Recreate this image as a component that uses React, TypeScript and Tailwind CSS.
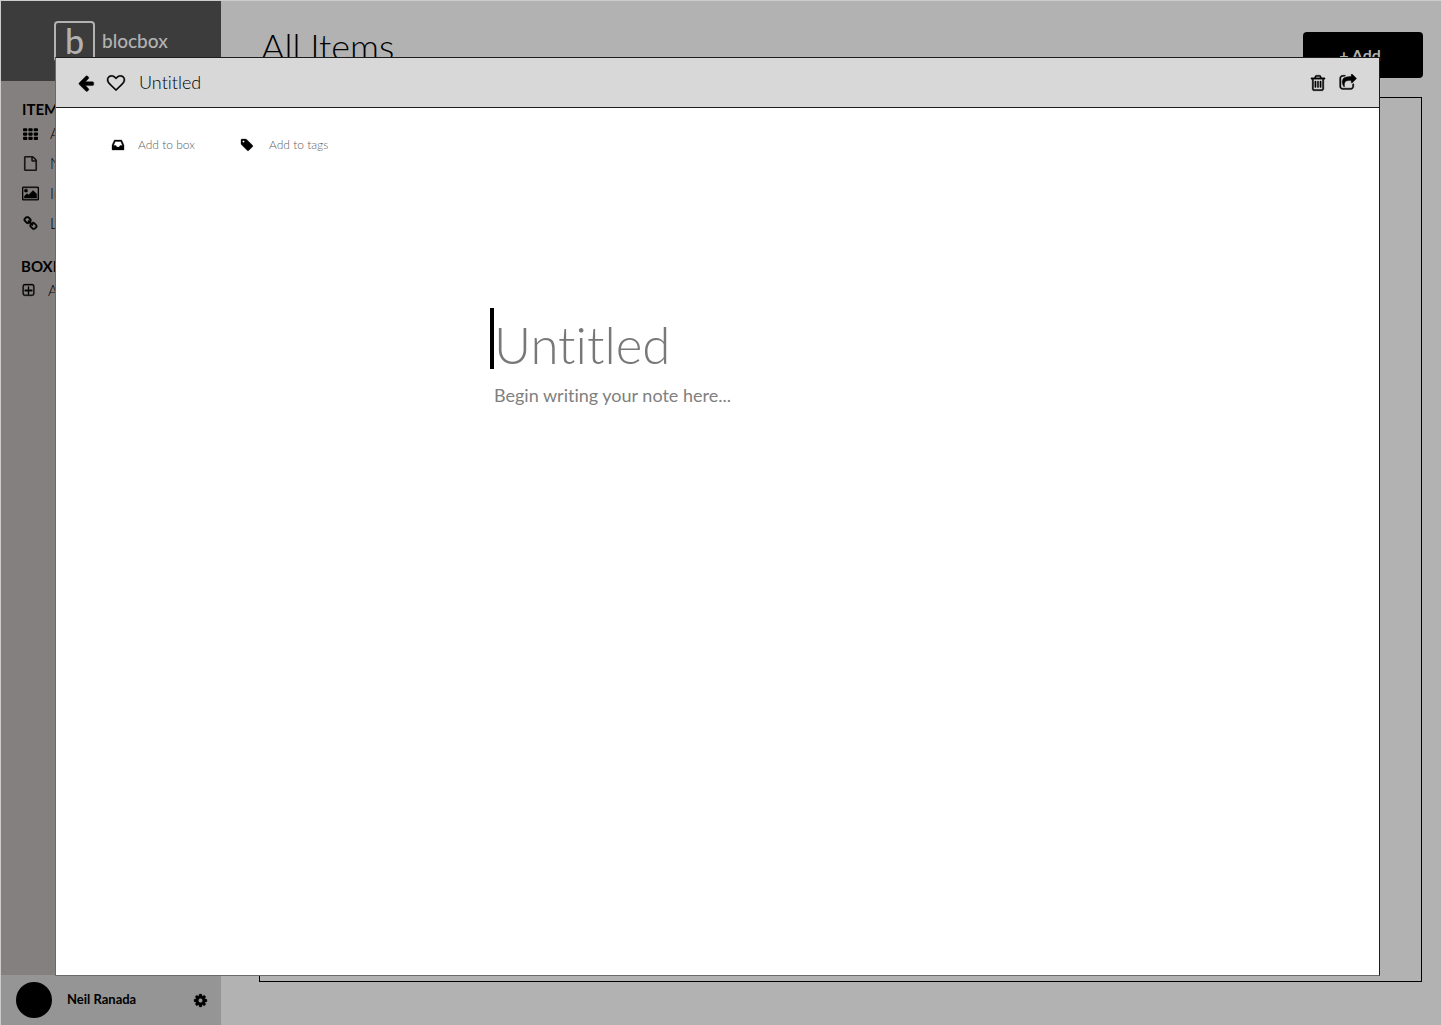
import React from "react";

const paths = {
  arrowLeft:
    "M1664 896v128q0 53-32.5 90.5t-84.5 37.5h-704l293 294q38 36 38 90t-38 90l-75 76q-37 37-90 37-52 0-91-37l-651-652q-37-37-37-90 0-52 37-91l651-650q38-38 91-38 52 0 90 38l75 74q38 38 38 91t-38 91l-293 293h704q52 0 84.5 37.5t32.5 90.5z",
  heart:
    "M1664 596q0-81-21.5-143t-55-98.5-81.5-59.5-94-31-98-8-112 25.5-110.5 64-86.5 72-60 61.5q-18 22-49 22t-49-22q-24-28-60-61.5t-86.5-72-110.5-64-112-25.5-98 8-94 31-81.5 59.5-55 98.5-21.5 143q0 168 187 355l581 560 580-559q188-188 188-356zm128 0q0 221-229 450l-623 600q-18 18-44 18t-44-18l-624-602q-10-8-27.5-26t-55.5-65.5-68-97.5-53.5-121-23.5-138q0-220 127-344t351-124q62 0 126.5 21.5t120 58 95.5 68.5 76 68q36-36 76-68t95.5-68.5 120-58 126.5-21.5q224 0 351 124t127 344z",
  trash:
    "M704 736v576q0 14-9 23t-23 9h-64q-14 0-23-9t-9-23v-576q0-14 9-23t23-9h64q14 0 23 9t9 23zm256 0v576q0 14-9 23t-23 9h-64q-14 0-23-9t-9-23v-576q0-14 9-23t23-9h64q14 0 23 9t9 23zm256 0v576q0 14-9 23t-23 9h-64q-14 0-23-9t-9-23v-576q0-14 9-23t23-9h64q14 0 23 9t9 23zm128 724v-948h-896v948q0 22 7 40.5t14.5 27 10.5 8.5h832q3 0 10.5-8.5t14.5-27 7-40.5zm-672-1076h448l-48-117q-7-9-17-11h-317q-10 2-17 11zm928 32v64q0 14-9 23t-23 9h-96v948q0 83-47 143.5t-113 60.5h-832q-66 0-113-58.5t-47-141.5v-952h-96q-14 0-23-9t-9-23v-64q0-14 9-23t23-9h309l70-167q15-37 54-63t79-26h320q40 0 79 26t54 63l70 167h309q14 0 23 9t9 23z",
  share:
    "M1472 989v259q0 119-84.5 203.5t-203.5 84.5h-832q-119 0-203.5-84.5t-84.5-203.5v-832q0-119 84.5-203.5t203.5-84.5h255q13 0 22.5 9.5t9.5 22.5q0 27-26 32-77 26-133 60-10 4-16 4h-112q-66 0-113 47t-47 113v832q0 66 47 113t113 47h832q66 0 113-47t47-113v-214q0-19 18-29 28-13 54-37 16-16 35-8 21 9 21 29zm237-496l-384 384q-18 19-45 19-12 0-25-5-39-17-39-59v-192h-160q-323 0-438 131-119 137-74 473 3 23-20 34-8 2-12 2-16 0-26-13-10-14-21-31t-39.5-68.5-49.5-99.5-38.5-114-17.5-122q0-49 3.5-91t14-90 28-88 47-81.5 68.5-74 94.5-61.5 124.5-48.5 159.5-30.5 196.5-11h160v-192q0-42 39-59 13-5 25-5 26 0 45 19l384 384q19 19 19 45t-19 45z",
  inbox:
    "M1151 960h316q-1-3-2.5-8t-2.5-8l-212-496h-708l-212 496q-1 2-2.5 8t-2.5 8h316l95 192h320zm513 30v482q0 26-19 45t-45 19h-1408q-26 0-45-19t-19-45v-482q0-62 25-123l238-552q10-25 36.5-42t52.5-17h832q26 0 52.5 17t36.5 42l238 552q25 61 25 123z",
  tag: "M576 448q0-53-37.5-90.5t-90.5-37.5-90.5 37.5-37.5 90.5 37.5 90.5 90.5 37.5 90.5-37.5 37.5-90.5zm1067 576q0 53-37 90l-491 492q-39 37-91 37-53 0-90-37l-715-716q-38-37-64.5-101t-26.5-117v-416q0-52 38-90t90-38h416q53 0 117 26.5t102 64.5l715 714q37 39 37 91z",
  file: "M1596 380q28 28 48 76t20 88v1152q0 40-28 68t-68 28h-1344q-40 0-68-28t-28-68v-1600q0-40 28-68t68-28h896q40 0 88 20t76 48zm-444-244v376h376q-10-29-22-41l-313-313q-12-12-41-22zm384 1528v-1024h-416q-40 0-68-28t-28-68v-416h-768v1536h1280z",
  image:
    "M576 576q0 80-56 136t-136 56-136-56-56-136 56-136 136-56 136 56 56 136zm1024 384v448h-1408v-192l320-320 160 160 512-512zm96-704h-1600q-13 0-22.5 9.5t-9.5 22.5v1216q0 13 9.5 22.5t22.5 9.5h1600q13 0 22.5-9.5t9.5-22.5v-1216q0-13-9.5-22.5t-22.5-9.5zm160 32v1216q0 66-47 113t-113 47h-1600q-66 0-113-47t-47-113v-1216q0-66 47-113t113-47h1600q66 0 113 47t47 113z",
  link: "M1520 1216q0-40-28-68l-208-208q-28-28-68-28-42 0-72 32 3 3 19 18.5t21.5 21.5 15 19 13 25.5 3.5 27.5q0 40-28 68t-68 28q-15 0-27.5-3.5t-25.5-13-19-15-21.5-21.5-18.5-19q-33 31-33 73 0 40 28 68l206 207q27 27 68 27 40 0 68-26l147-146q28-28 28-67zm-703-705q0-40-28-68l-206-207q-28-28-68-28-39 0-68 27l-147 146q-28 28-28 67 0 40 28 68l208 208q27 27 68 27 42 0 72-31-3-3-19-18.5t-21.5-21.5-15-19-13-25.5-3.5-27.5q0-40 28-68t68-28q15 0 27.5 3.5t25.5 13 19 15 21.5 21.5 18.5 19q33-31 33-73zm895 705q0 120-85 203l-147 146q-83 83-203 83-121 0-204-85l-206-207q-83-83-83-203 0-123 88-209l-88-88q-86 88-208 88-120 0-204-84l-208-208q-84-84-84-204t85-203l147-146q83-83 203-83 121 0 204 85l206 207q83 83 83 203 0 123-88 209l88 88q86-88 208-88 120 0 204 84l208 208q84 84 84 204z",
  cog: "M1152 896q0-106-75-181t-181-75-181 75-75 181 75 181 181 75 181-75 75-181zm512-109v222q0 12-8 23t-20 13l-185 28q-19 54-39 91 35 50 107 138 10 12 10 25t-9 23q-27 37-99 108t-94 71q-12 0-26-9l-138-108q-44 23-91 38-16 136-29 186-7 28-36 28h-222q-14 0-24.5-8.5t-11.5-21.5l-28-184q-49-16-90-37l-141 107q-10 9-25 9-14 0-25-11-126-114-165-168-7-10-7-23 0-12 8-23 15-21 51-66.5t54-70.5q-27-50-41-99l-183-27q-13-2-21-12.5t-8-23.5v-222q0-12 8-23t19-13l186-28q14-46 39-92-40-57-107-138-10-12-10-24 0-10 9-23 26-36 98.5-107.5t94.5-71.5q13 0 26 10l138 107q44-23 91-38 16-136 29-186 7-28 36-28h222q14 0 24.5 8.5t11.5 21.5l28 184q49 16 90 37l142-107q9-9 24-9 13 0 25 10 129 119 165 170 7 8 7 22 0 12-8 23-15 21-51 66.5t-54 70.5q26 50 41 98l183 28q13 2 21 12.5t8 23.5z",
  grid: "M96 256h320q96 0 96 96v192q0 96-96 96h-320q-96 0-96-96v-192q0-96 96-96zm640 0h320q96 0 96 96v192q0 96-96 96h-320q-96 0-96-96v-192q0-96 96-96zm640 0h320q96 0 96 96v192q0 96-96 96h-320q-96 0-96-96v-192q0-96 96-96zM96 768h320q96 0 96 96v192q0 96-96 96h-320q-96 0-96-96v-192q0-96 96-96zm640 0h320q96 0 96 96v192q0 96-96 96h-320q-96 0-96-96v-192q0-96 96-96zm640 0h320q96 0 96 96v192q0 96-96 96h-320q-96 0-96-96v-192q0-96 96-96zM96 1280h320q96 0 96 96v192q0 96-96 96h-320q-96 0-96-96v-192q0-96 96-96zm640 0h320q96 0 96 96v192q0 96-96 96h-320q-96 0-96-96v-192q0-96 96-96zm640 0h320q96 0 96 96v192q0 96-96 96h-320q-96 0-96-96v-192q0-96 96-96z",
  plusSquare:
    "M1344 832v128q0 32-32 32h-352v352q0 32-32 32h-64q-32 0-32-32v-352h-352q-32 0-32-32v-128q0-32 32-32h352v-352q0-32 32-32h64q32 0 32 32v352h352q32 0 32 32zM480 256h832q160 0 160 160v832q0 160-160 160h-832q-160 0-160-160v-832q0-160 160-160zm0-128q-288 0-288 288v832q0 288 288 288h832q288 0 288-288v-832q0-288-288-288z",
};

function Icon({
  name,
  className,
  viewBox = "0 0 1792 1792",
}: {
  name: keyof typeof paths;
  className: string;
  viewBox?: string;
}) {
  return (
    <svg
      viewBox={viewBox}
      className={className}
      fill="currentColor"
      stroke="currentColor"
      strokeWidth={name === "grid" ? 0 : 40}
      fillRule={name === "plusSquare" ? "evenodd" : "nonzero"}
      aria-hidden="true"
    >
      <path d={paths[name]} />
    </svg>
  );
}

const items: { label: string; icon: keyof typeof paths; size: string; viewBox?: string }[] = [
  { label: "All Items", icon: "grid", size: "size-[15px]" },
  { label: "Notes", icon: "file", size: "size-[15px]", viewBox: "0 -32 1792 1856" },
  { label: "Images", icon: "image", size: "size-[17px]", viewBox: "-64 0 1920 1792" },
  { label: "Links", icon: "link", size: "size-[15px]" },
];

function Sidebar() {
  return (
    <aside className="flex w-[220px] shrink-0 flex-col bg-[#858080]">
      <a href="#" className="flex h-20 shrink-0 items-center gap-[7px] bg-[#3c3c3c] pl-[53px] text-[#b2b2b2]">
        <span className="flex size-[41px] items-center justify-center rounded-sm border-2 border-[#b2b2b2] text-[34px] leading-none font-medium">
          b
        </span>
        <span className="text-[19px] font-medium">blocbox</span>
      </a>
      <nav className="flex-1 px-5 pt-5">
        <h2 className="pl-px text-[15px] leading-4 font-bold">ITEMS</h2>
        <ul className="pt-px">
          {items.map((item) => (
            <li key={item.label}>
              <a href="#" className="flex h-[30px] items-center gap-[11px] text-[15px] font-light">
                <span className="flex w-[18px] justify-center">
                  <Icon name={item.icon} className={item.size} viewBox={item.viewBox} />
                </span>
                {item.label}
              </a>
            </li>
          ))}
        </ul>
        <h2 className="mt-5 text-[15px] leading-4 font-bold">BOXES</h2>
        <button type="button" className="flex h-8 items-center gap-3 text-[15px] font-light">
          <Icon name="plusSquare" className="size-[15px]" />
          Add box
        </button>
      </nav>
      <div className="flex h-[50px] shrink-0 items-center bg-[#959595] pr-[13px] pl-[15px]">
        <span className="size-9 rounded-full bg-black" />
        <span className="ml-[15px] flex-1 text-[13px] font-bold">Neil Ranada</span>
        <button type="button" aria-label="Settings">
          <Icon name="cog" className="size-[15px]" />
        </button>
      </div>
    </aside>
  );
}

function NoteDialog() {
  return (
    <div className="fixed inset-0 flex pt-[57px] pr-[61px] pb-[49px] pl-[55px]">
      <section
        role="dialog"
        aria-label="Untitled"
        className="flex flex-1 flex-col border border-[#1c1c1c] border-b-[#6a6a6a] border-l-[#6a6a6a] bg-white"
      >
        <header className="flex h-[50px] shrink-0 items-center border-b border-[#1c1c1c] bg-[#d8d8d8] pr-[22px] pl-[21px]">
          <button type="button" aria-label="Back">
            <Icon name="arrowLeft" className="size-[18px]" />
          </button>
          <button type="button" aria-label="Favorite" className="ml-3">
            <Icon name="heart" className="size-[18px] overflow-visible" />
          </button>
          <h1 className="ml-[14px] flex-1 pb-0.5 text-lg font-light">Untitled</h1>
          <button type="button" aria-label="Delete">
            <Icon name="trash" className="size-[18px]" />
          </button>
          <button type="button" aria-label="Share" className="ml-3">
            <Icon name="share" className="size-[18px]" />
          </button>
        </header>
        <div className="flex gap-[45px] pt-[29px] pl-[55px] text-xs text-[#606060]">
          <button type="button" className="flex items-center gap-[13px] font-light">
            <Icon name="inbox" className="size-[14px] text-black" />
            Add to box
          </button>
          <button type="button" className="flex items-center gap-[15px] font-light">
            <Icon name="tag" className="size-[14px] text-black" />
            Add to tags
          </button>
        </div>
        <div className="ml-[434px] flex flex-1 flex-col pt-[155px]">
          <div className="flex h-[61px]">
            <span className="w-1 bg-black" />
            <input
              aria-label="Title"
              placeholder="Untitled"
              className="h-[74px] min-w-0 flex-1 text-[51px] font-light outline-none placeholder:text-[#787878] placeholder:opacity-100"
            />
          </div>
          <textarea
            aria-label="Note"
            placeholder="Begin writing your note here..."
            className="mt-3 ml-1 flex-1 resize-none text-lg leading-7 outline-none placeholder:text-[#808080] placeholder:opacity-100"
          />
        </div>
      </section>
    </div>
  );
}

export default function App() {
  return (
    <div className="flex min-h-screen border-t border-l border-[#cccccc] bg-[#b2b2b2] font-['Lato',sans-serif] text-black [font-variant-ligatures:none]">
      <Sidebar />
      <main className="flex flex-1 flex-col pr-[18px] pb-[43px] pl-[38px]">
        <div className="flex items-start justify-between pt-[31px]">
          <h1 className="pl-0.5 text-4xl leading-7 font-light">All Items</h1>
          <button type="button" className="h-[46px] w-[120px] rounded bg-black pr-1.5 text-base font-bold text-[#b2b2b2]">
            + Add
          </button>
        </div>
        <div className="mt-[19px] mr-px flex-1 border border-black" />
      </main>
      <NoteDialog />
    </div>
  );
}
